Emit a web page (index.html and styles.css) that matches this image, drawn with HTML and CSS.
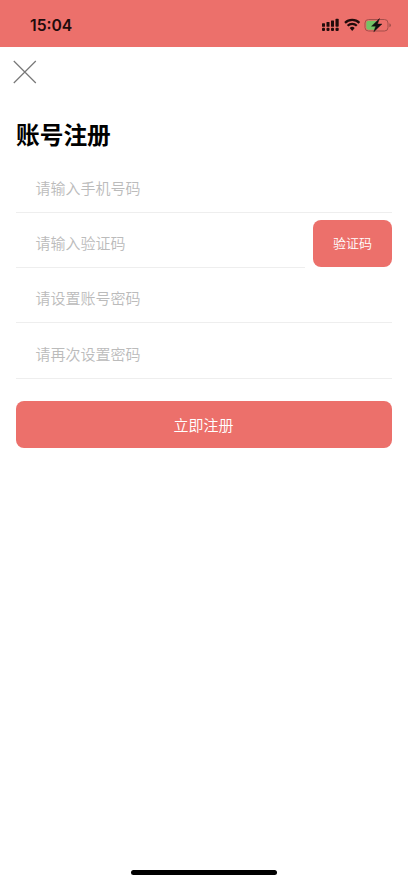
FILE: index.html
```html
<!DOCTYPE html>
<html lang="zh-CN">
<head>
<meta charset="utf-8">
<title>账号注册</title>
<link rel="stylesheet" href="styles.css">
</head>
<body>
<header class="status">
  <span class="time">15:04</span>
  <svg class="indicators" width="70" height="16" viewBox="0 0 70 16">
    <g fill="#210b0b">
      <rect x="0" y="6.200" width="3" height="3.500" rx=".5"/><rect x="0" y="10.700" width="3" height="3.300" rx="1"/>
      <rect x="4.500" y="5" width="3" height="4.700" rx=".5"/><rect x="4.500" y="10.700" width="3" height="3.300" rx="1"/>
      <rect x="9" y="3.500" width="3" height="6.200" rx=".5"/><rect x="9" y="10.700" width="3" height="3.300" rx="1"/>
      <rect x="13.500" y="1.700" width="3.200" height="8" rx=".8"/><rect x="13.500" y="10.700" width="3.200" height="3.300" rx="1"/>
    </g>
    <g fill="none" stroke="#210b0b" stroke-width="2.200"><path d="M23 5.900a10.300 10.300 0 0 1 14.400 0M25.600 8.700a6.600 6.600 0 0 1 9.200 0"/></g>
    <path d="M27.700 11a3.700 3.700 0 0 1 5 0L30.200 13.900z" fill="#210b0b"/>
    <rect x="43" y="2.500" width="23" height="11.500" rx="3.500" fill="none" stroke="#a54f4b"/>
    <rect x="44.300" y="3.800" width="11" height="9" rx="2" fill="#74c365"/>
    <path d="M67.300 6.200v4q1.700-.7 1.700-2t-1.700-2z" fill="#a54f4b"/>
    <path d="M57.500 1.500 49.500 9.200h4.200L51.800 14.800 60 7h-4.500z" fill="#111" stroke="#111" stroke-width=".4"/>
  </svg>
</header>
<main>
  <button class="close" aria-label="关闭"><svg width="24" height="24" viewBox="0 0 24 24"><path d="M.8 1 22.800 23M22.800 1 .8 23" stroke="#777" stroke-width="1.200" fill="none"/></svg></button>
  <h1>账号注册</h1>
  <form>
    <div class="field">请输入手机号码</div>
    <div class="row"><div class="field">请输入验证码</div><button class="code" type="button">验证码</button></div>
    <div class="field">请设置账号密码</div>
    <div class="field">请再次设置密码</div>
    <button class="submit" type="button">立即注册</button>
  </form>
</main>
<footer><div class="home"></div></footer>
</body>
</html>
```
FILE: styles.css
```css
* { box-sizing: border-box; }
body { margin: 0; height: 883px; display: flex; flex-direction: column; background: #fff; font-family: "Liberation Sans", "Noto Sans CJK SC", sans-serif; overflow: hidden; }
button { border: 0; padding: 0; font-family: inherit; font-weight: 350; color: #fff; background: #ec706b; }
.status { height: 47px; background: #ec706b; display: flex; justify-content: space-between; padding: 0 16px 0 30px; flex: none; }
.time { font: 600 15.700px/51px Inter, sans-serif; color: #210b0b; }
.indicators { margin-top: 16.500px; }
main { flex: 1; padding: 0 16px; }
.close { display: block; background: none; width: 24px; height: 24px; margin: 13px 0 0 -3px; }
.close svg { display: block; }
h1 { margin: 35px 0 11px; font-size: 23.700px; line-height: 35px; font-weight: 700; color: #000; }
.field { height: 48px; margin-bottom: 7.200px; padding-left: 19.500px; border-bottom: 1px solid #eee; font-size: 15px; font-weight: 350; line-height: 47px; color: #bbb; }
.row { display: flex; gap: 8px; }
.row .field { flex: 1; }
.code { width: 79px; height: 47px; border-radius: 8px; font-size: 13px; padding-bottom: 2px; }
.submit { display: block; width: 100%; height: 47px; margin-top: 22.200px; border-radius: 8px; font-size: 15px; padding: 1px 1px 0 0; }
footer { height: 13px; display: flex; justify-content: center; }
.home { width: 146px; height: 5px; border-radius: 3px; background: #000; }
```
